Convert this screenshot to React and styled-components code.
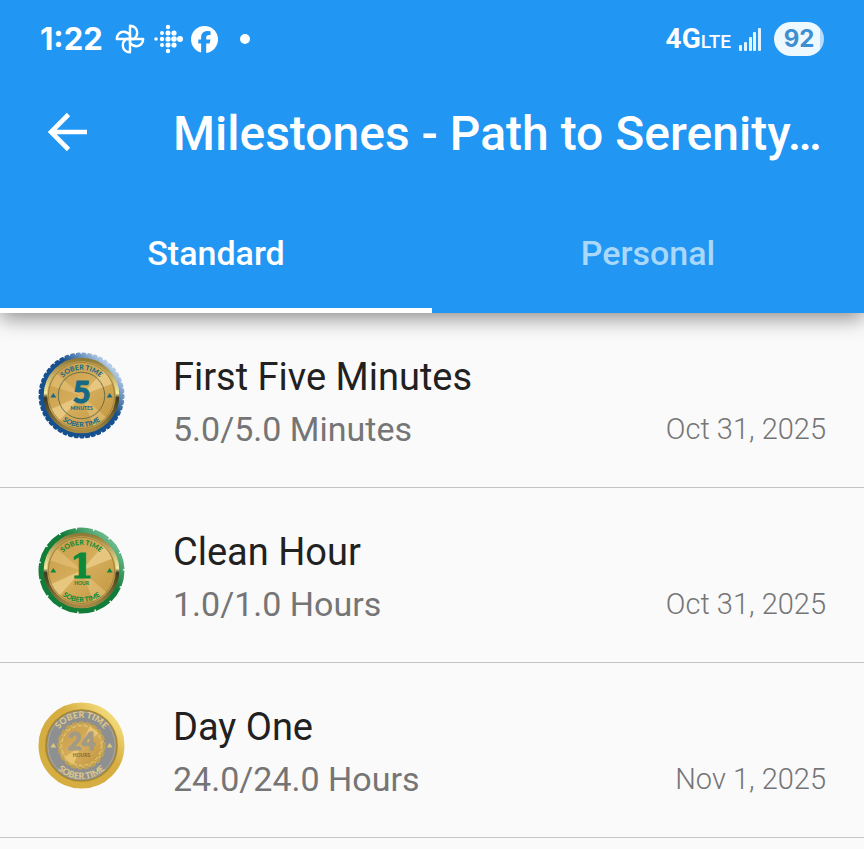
import React from 'react';
import styled, { createGlobalStyle } from 'styled-components';

const GlobalStyle = createGlobalStyle`
  * { box-sizing: border-box; }
  body {
    margin: 0;
    background: #fafafa;
    font-family: Roboto, 'Liberation Sans', sans-serif;
    color: #212121;
  }
`;

const Screen = styled.div`
  min-height: 100vh;
  overflow: hidden;
`;

const Header = styled.header`
  position: relative;
  background: #2196f3;
  color: #fff;
  box-shadow: 0 5px 20px rgba(0, 0, 0, 0.45);
`;

const StatusBar = styled.div`
  display: flex;
  align-items: center;
  justify-content: space-between;
  height: 66px;
  padding: 12px 40px 0;
`;

const StatusGroup = styled.div`
  display: flex;
  align-items: center;
  gap: 8px;
`;

const Clock = styled.time`
  font: 700 31px/36px Inter, sans-serif;
  margin-right: 4px;
`;

const MoreDot = styled.span`
  width: 10px;
  height: 10px;
  margin-left: 14px;
  border-radius: 50%;
  background: #fff;
`;

const Network = styled.span`
  padding-top: 2px;
  font: 700 28px/34px Roboto, sans-serif;
`;

const NetworkSub = styled.small`
  font-size: 19px;
  font-weight: 500;
`;

const Battery = styled.span`
  width: 50px;
  margin-left: 4px;
  border-radius: 17px;
  background: linear-gradient(90deg, #eef8ff 92%, #b5dcfb 92%);
  color: #3d8fd1;
  font: 700 24px/34px Inter, sans-serif;
  text-align: center;
`;

const Toolbar = styled.div`
  display: flex;
  align-items: center;
  height: 132px;
  padding: 0 38px;
`;

const BackButton = styled.button`
  display: flex;
  flex: 0 0 135px;
  padding: 0 0 0 8px;
  border: 0;
  background: none;
  color: inherit;
`;

const Title = styled.h1`
  flex: 1;
  min-width: 0;
  margin: 0;
  padding-top: 4px;
  overflow: hidden;
  white-space: nowrap;
  text-overflow: ellipsis;
  font-size: 48px;
  line-height: 64px;
  font-weight: 500;
`;

const Tabs = styled.div`
  display: flex;
`;

const Tab = styled.button`
  flex: 1;
  height: 115px;
  padding: 0;
  border: 0;
  border-bottom: 5px solid ${(p) => (p.$active ? '#fff' : 'transparent')};
  background: none;
  color: ${(p) => (p.$active ? '#fff' : '#a9d8fb')};
  font: 500 34px/40px Roboto, sans-serif;
`;

const List = styled.ul`
  margin: 0;
  padding: 0;
  list-style: none;
`;

const Row = styled.li`
  display: flex;
  align-items: center;
  height: 175px;
  padding: 0 38px;
  border-bottom: 1px solid #c4c4c4;
`;

const MedalSlot = styled.div`
  display: flex;
  flex: 0 0 135px;
  padding-bottom: 10px;
`;

const Details = styled.div`
  flex: 1;
  padding-top: 6px;
`;

const Name = styled.h2`
  margin: 0;
  font-size: 38px;
  line-height: 52px;
  font-weight: 400;
`;

const Progress = styled.p`
  margin: 0;
  font-size: 34px;
  line-height: 52px;
  color: #757575;
`;

const Earned = styled.time`
  align-self: flex-end;
  padding-bottom: 32px;
  font-size: 29px;
  line-height: 52px;
  font-weight: 300;
  color: #757575;
`;

const PinwheelIcon = () => (
  <svg width="30" height="30" viewBox="-15 -15 30 30" fill="none" stroke="#fff" strokeWidth="2.4" strokeLinejoin="round" aria-hidden="true">
    {[0, 90, 180, 270].map((a) => (
      <path key={a} transform={`rotate(${a})`} d="M0 0V-13.2C4 -13.2 7.2 -10.3 7.2 -6.600C7.2 -3.800 6 -1.600 4 0Z" />
    ))}
  </svg>
);

const DOTS = [
  [0, -12, 2.2], [-6, -6, 2], [0, -6, 2.5], [6, -6, 2.6],
  [-12, 0, 1.8], [-6, 0, 2.2], [0, 0, 2.6], [6, 0, 2.8], [12, 0, 3],
  [-6, 6, 2], [0, 6, 2.5], [6, 6, 2.6], [0, 12, 2.2],
];

const DotsIcon = () => (
  <svg width="30" height="30" viewBox="-15 -15 30 30" fill="#fff" aria-hidden="true">
    {DOTS.map(([x, y, r]) => <circle key={`${x},${y}`} cx={x} cy={y} r={r} />)}
  </svg>
);

const FacebookIcon = () => (
  <svg width="27" height="27" viewBox="0 0 24 24" fill="#fff" aria-hidden="true">
    <path d="M24 12a12 12 0 1 0-15 11.600V15.600H6.500V12H9V10.400c0-4 1.900-6 5.900-6 .8 0 2 .2 2.500.3V8c-.3 0-.8-.1-1.300-.1-1.900 0-2.600.7-2.600 2.600V12h3.800l-.7 3.600h-3.100v8.300A12 12 0 0 0 24 12z" />
  </svg>
);

const SignalIcon = () => (
  <svg width="23" height="25" viewBox="0 0 23 25" fill="#e4f4ff" aria-hidden="true">
    <rect x="0" y="18" width="3" height="6" rx="1" />
    <rect x="5" y="15" width="3" height="9" rx="1" />
    <rect x="10" y="10" width="3" height="14" rx="1" />
    <rect x="14" y="5" width="3" height="19" rx="1" />
    <rect x="19" y="1" width="3" height="23" rx="1" />
  </svg>
);

const BackIcon = () => (
  <svg width="44" height="44" viewBox="0 0 44 44" fill="none" stroke="#fff" strokeWidth="4.6" aria-hidden="true">
    <path d="M41 22H6M22.500 4.500L5 22L22.500 39.500" />
  </svg>
);

const MEDALS = {
  five: { rim: '#17508f', light: '#b4cce6', ink: '#176a86', value: '5', unit: 'MINUTES', size: 31 },
  hour: { rim: '#127c39', light: '#69b88a', ink: '#0c8a3a', value: '1', unit: 'HOUR', size: 33 },
  day: { rim: '#d5ad40', light: '#f1d877', ink: '#a39a86', value: '24', unit: 'HOURS', size: 24 },
};

const Medal = ({ kind }) => {
  const m = MEDALS[kind];
  const silver = kind === 'day';
  const id = (name) => `${kind}-${name}`;
  return (
    <svg width="87" height="87" viewBox="-44 -44 88 88" role="img" aria-label={`${m.value} ${m.unit} medal`}>
      <defs>
        <linearGradient id={id('rim')} x1="0" y1="1" x2="1" y2="0">
          <stop offset="0" stopColor={m.rim} />
          <stop offset="0.6" stopColor={m.rim} />
          <stop offset="0.85" stopColor={m.light} />
        </linearGradient>
        <linearGradient id={id('edge')} x1="0" y1="0" x2="0" y2="1">
          <stop offset="0" stopColor="#8f7a36" />
          <stop offset="0.47" stopColor="#f6eca0" />
          <stop offset="0.53" stopColor="#3c3a1e" />
          <stop offset="1" stopColor="#a48a45" />
        </linearGradient>
        <linearGradient id={id('face')} x1="0" y1="0" x2="1" y2="1">
          <stop offset="0" stopColor="#c39a45" />
          <stop offset="0.5" stopColor="#d6ae5c" />
          <stop offset="1" stopColor="#be923c" />
        </linearGradient>
        <path id={id('top')} d={silver ? 'M-28 0A28 28 0 0 1 28 0' : 'M-26 0A26 26 0 0 1 26 0'} />
        <path id={id('bottom')} d={silver ? 'M-34 0A34 34 0 0 0 34 0' : 'M-32 0A32 32 0 0 0 32 0'} />
      </defs>
      <circle r="42" fill={`url(#${id('rim')})`} />
      {!silver && (
        <circle
          r="42"
          fill="none"
          stroke={`url(#${id('rim')})`}
          strokeWidth="3"
          strokeLinecap={kind === 'five' ? 'round' : 'butt'}
          pathLength="360"
          strokeDasharray={kind === 'five' ? '3 5' : '22 2'}
        />
      )}
      {silver ? (
        <>
          <circle r="42" fill="none" stroke={`url(#${id('rim')})`} strokeWidth="3" />
          <circle r="36" fill="#8d8f91" stroke="#a58736" strokeWidth="1.5" />
          <circle r="34" fill="none" stroke="#c5b98e" strokeWidth="0.6" />
          <circle r="22" fill={`url(#${id('face')})`} stroke="#d7b760" strokeWidth="2" />
          <path d="M0 0L8 -19A21 21 0 0 1 17 -12ZM0 0L-8 19A21 21 0 0 1 -17 12Z" fill="#f2cf78" opacity="0.7" />
          <circle r="23" fill="none" stroke="#c1a052" strokeWidth="3" strokeDasharray="5 2" />
          <circle r="20" fill="none" stroke="#e7cd7b" strokeWidth="1" strokeDasharray="4 2" />
        </>
      ) : (
        <>
          <circle r="36.5" fill={`url(#${id('face')})`} stroke={`url(#${id('edge')})`} strokeWidth="3.5" />
          <path d="M0 0L22 -25A33 33 0 0 1 31 -12ZM0 0L-31 14A34 34 0 0 0 -22 25Z" fill="#f3d899" opacity="0.6" />
          <path d="M0 0L-25 -22A33 33 0 0 0 -32 -10ZM0 0L25 22A33 33 0 0 1 12 31Z" fill="#ecc982" opacity="0.5" />
          <circle r="33.5" fill="none" stroke="#8a7337" strokeWidth="0.7" />
          {kind === 'five' && <circle r="23.5" fill="none" stroke="#5d6848" strokeWidth="0.9" />}
        </>
      )}
      <g fill={silver ? '#dcc88a' : m.ink} fontFamily="Lato, sans-serif" fontWeight="900" fontSize={silver ? 9 : 7} textAnchor="middle">
        <text><textPath href={`#${id('top')}`} startOffset="50%">SOBER TIME</textPath></text>
        <text><textPath href={`#${id('bottom')}`} startOffset="50%">SOBER TIME</textPath></text>
      </g>
      <g fill={silver ? '#e0c878' : m.ink}>
        <path d="M-31.500 2L-28.500 -2.500L-25.500 2Z" />
        <path d="M25.500 2L28.500 -2.500L31.500 2Z" />
      </g>
      <text
        y={silver ? 5 : 8}
        textAnchor="middle"
        fill={m.ink}
        stroke={m.ink}
        strokeWidth="1.2"
        fontFamily={kind === 'hour' ? 'DejaVu Serif, serif' : 'Lato, sans-serif'}
        fontWeight="900"
        fontSize={m.size}
      >
        {m.value}
      </text>
      <text y={silver ? 12 : 15} textAnchor="middle" fill={silver ? '#86703a' : m.ink} fontFamily="Lato, sans-serif" fontWeight="900" fontSize="5">
        {m.unit}
      </text>
    </svg>
  );
};

const MILESTONES = [
  { kind: 'five', name: 'First Five Minutes', progress: '5.0/5.0 Minutes', date: 'Oct 31, 2025', iso: '2025-10-31' },
  { kind: 'hour', name: 'Clean Hour', progress: '1.0/1.0 Hours', date: 'Oct 31, 2025', iso: '2025-10-31' },
  { kind: 'day', name: 'Day One', progress: '24.0/24.0 Hours', date: 'Nov 1, 2025', iso: '2025-11-01' },
];

export default function App() {
  return (
    <Screen>
      <GlobalStyle />
      <Header>
        <StatusBar>
          <StatusGroup>
            <Clock>1:22</Clock>
            <PinwheelIcon />
            <DotsIcon />
            <FacebookIcon />
            <MoreDot />
          </StatusGroup>
          <StatusGroup>
            <Network>4G<NetworkSub>LTE</NetworkSub></Network>
            <SignalIcon />
            <Battery>92</Battery>
          </StatusGroup>
        </StatusBar>
        <Toolbar>
          <BackButton type="button" aria-label="Back"><BackIcon /></BackButton>
          <Title>Milestones - Path to Serenity…</Title>
        </Toolbar>
        <Tabs role="tablist">
          <Tab type="button" role="tab" aria-selected="true" $active>Standard</Tab>
          <Tab type="button" role="tab" aria-selected="false">Personal</Tab>
        </Tabs>
      </Header>
      <List>
        {MILESTONES.map((m) => (
          <Row key={m.kind}>
            <MedalSlot><Medal kind={m.kind} /></MedalSlot>
            <Details>
              <Name>{m.name}</Name>
              <Progress>{m.progress}</Progress>
            </Details>
            <Earned dateTime={m.iso}>{m.date}</Earned>
          </Row>
        ))}
      </List>
    </Screen>
  );
}
